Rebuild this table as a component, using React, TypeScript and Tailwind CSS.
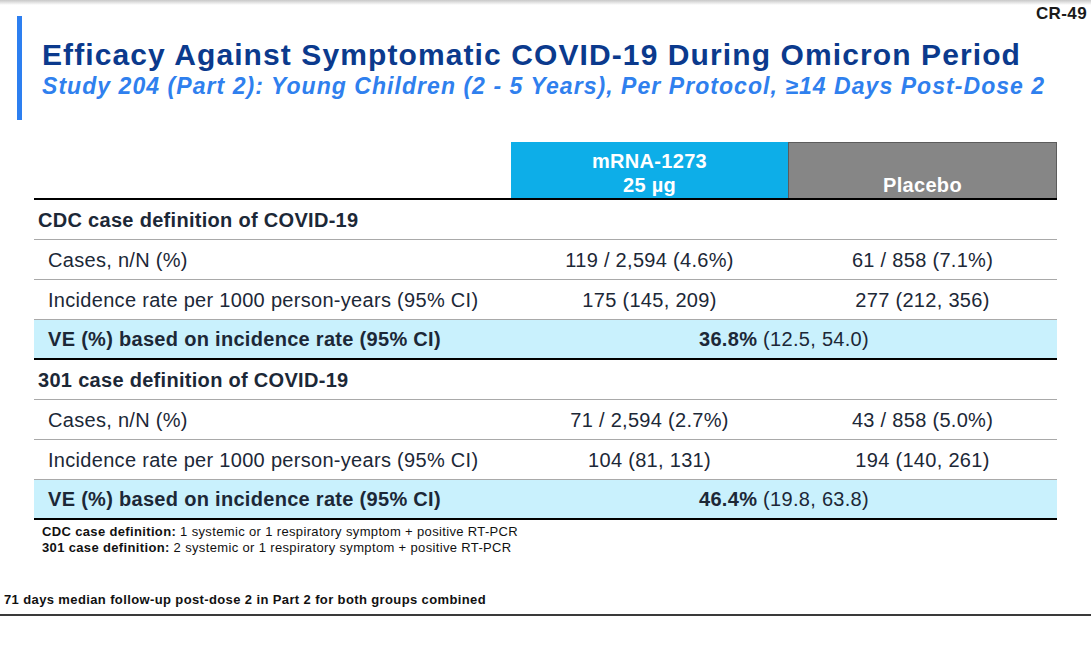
import React from "react";

const font = { fontFamily: '"Liberation Sans", Arial, Helvetica, sans-serif' };

function SectionRow({ label }: { label: string }) {
  return (
    <div className="flex h-[40px] items-center border-b border-[#a9a9a9] pl-[4px] text-[20px] font-bold tracking-[0.3px] text-[#1c2837]">
      {label}
    </div>
  );
}

function DataRow({ label, a, b }: { label: string; a: string; b: string }) {
  return (
    <div className="flex h-[40px] items-center border-b border-[#a9a9a9] text-[20px] tracking-[0.3px] text-[#1c2837]">
      <div className="w-[477px] pl-[14px]">{label}</div>
      <div className="w-[277px] text-center">{a}</div>
      <div className="w-[269px] text-center">{b}</div>
    </div>
  );
}

function VERow({ bold, rest }: { bold: string; rest: string }) {
  return (
    <div className="flex h-[40px] items-center border-b-2 border-black bg-[#c9f1fd] text-[20px] tracking-[0.3px] text-[#1c2837]">
      <div className="w-[477px] pl-[14px] font-bold">VE (%) based on incidence rate (95% CI)</div>
      <div className="w-[546px] text-center">
        <span className="font-bold">{bold}</span> {rest}
      </div>
    </div>
  );
}

export default function App() {
  return (
    <div className="relative h-[645px] w-[1091px] overflow-hidden bg-white" style={font}>
      <div className="h-[5px] w-full bg-gradient-to-b from-[#c8c8c8] to-white" />
      <div className="absolute right-[4px] top-[5px] text-[17px] font-bold leading-none tracking-[0.4px] text-[#1a1a1a]">CR-49</div>

      <div className="flex pt-[11px]">
        <div className="ml-[17px] h-[104px] w-[5px] bg-[#2d7ff0]" />
        <div className="ml-[20px] pt-[24px]">
          <div className="text-[30px] font-bold leading-[30px] tracking-[1.1px] text-[#0b3a8d]">
            Efficacy Against Symptomatic COVID-19 During Omicron Period
          </div>
          <div className="mt-[5px] text-[23px] font-bold italic leading-[23px] tracking-[1.05px] text-[#2f80ee]">
            Study 204 (Part 2): Young Children (2 - 5 Years), Per Protocol, ≥14 Days Post-Dose 2
          </div>
        </div>
      </div>

      <div className="ml-[34px] mt-[22px] w-[1023px]">
        <div className="flex h-[58px] border-b-2 border-black">
          <div className="w-[477px]" />
          <div className="flex w-[277px] flex-col items-center justify-end bg-[#0daee8] pb-[1px] text-[20px] font-bold leading-[24px] tracking-[0.3px] text-white">
            <div>mRNA-1273</div>
            <div>25 µg</div>
          </div>
          <div className="flex w-[269px] flex-col items-center justify-end border-x border-t border-[#5c5c5c] bg-[#868686] pb-[1px] text-[20px] font-bold leading-[24px] tracking-[0.3px] text-white">
            <div>Placebo</div>
          </div>
        </div>

        <SectionRow label="CDC case definition of COVID-19" />
        <DataRow label="Cases, n/N (%)" a="119 / 2,594 (4.6%)" b="61 / 858 (7.1%)" />
        <DataRow label="Incidence rate per 1000 person-years (95% CI)" a="175 (145, 209)" b="277 (212, 356)" />
        <VERow bold="36.8%" rest="(12.5, 54.0)" />

        <SectionRow label="301 case definition of COVID-19" />
        <DataRow label="Cases, n/N (%)" a="71 / 2,594 (2.7%)" b="43 / 858 (5.0%)" />
        <DataRow label="Incidence rate per 1000 person-years (95% CI)" a="104 (81, 131)" b="194 (140, 261)" />
        <VERow bold="46.4%" rest="(19.8, 63.8)" />
      </div>

      <div className="ml-[42px] mt-[4px] text-[13px] leading-[16px] tracking-[0.35px] text-[#111]">
        <div>
          <span className="font-bold">CDC case definition:</span> 1 systemic or 1 respiratory symptom + positive RT-PCR
        </div>
        <div>
          <span className="font-bold">301 case definition:</span> 2 systemic or 1 respiratory symptom + positive RT-PCR
        </div>
      </div>

      <div className="ml-[4px] mt-[36px] text-[13px] font-bold leading-[16px] tracking-[0.38px] text-[#111]">
        71 days median follow-up post-dose 2 in Part 2 for both groups combined
      </div>
      <div className="mt-[6px] h-[2px] w-full bg-[#3a3a3a]" />
    </div>
  );
}
